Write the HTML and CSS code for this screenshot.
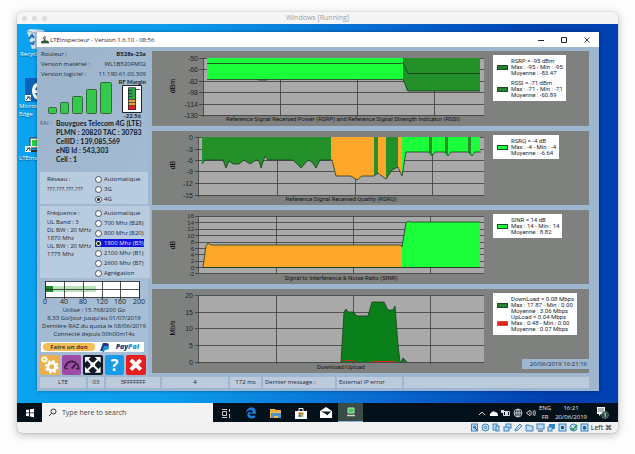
FILE: index.html
```html
<!DOCTYPE html>
<html lang="fr">
<head>
<meta charset="utf-8">
<title>LTEInspecteur</title>
<link rel="stylesheet" href="styles.css">
</head>
<body>
<div class="vm">
  <header class="vm-title">
    <span class="dot"></span><span class="dot"></span><span class="dot"></span>
    <span class="vm-name">Windows [Running]</span>
  </header>

  <main class="desktop">
    <div class="shortcut bin">
      <svg width="20" height="22" viewBox="0 0 20 22"><path d="M1 3l3-2 13 1 2 2-3 16-10 1z" fill="#cfe3f1"/><path d="M1 3l8 2 10-1M9 5l1 15" stroke="#8fb0c8" fill="none"/><path d="M3 11l3-4 2 3M8 13l-1 3-3-1" stroke="#1769c4" stroke-width="2" fill="none"/></svg>
      <span>Recycle</span>
    </div>
    <div class="shortcut edge">
      <svg width="24" height="24" viewBox="0 0 24 24"><path d="M0 0h24v24H0z" fill="#0b63b5"/><path d="M7 12C8 5 12 4 17 4v4c-4-1-6 1-7 4h8v3h-8c1 3 4 4 7 3v4c-6 1-10-3-10-10z" fill="#fff"/><path d="M0 17h6v6H0z" fill="#fff"/><path d="M1 22l3-3M2 19h3v3" stroke="#146" fill="none"/></svg>
      <span>Micros<br>Edge</span>
    </div>
    <div class="shortcut lte">
      <svg width="20" height="18" viewBox="0 0 20 18"><path d="M5 2h13v10H5z" fill="#eee" stroke="#333"/><path d="M7 4h11v6H7z" fill="#22d044"/><path d="M0 10h6v6H0z" fill="#fff"/><path d="M1 15l3-3M2 12h3v3" stroke="#146" fill="none"/><path d="M6 15h13" stroke="#333" stroke-width="2"/></svg>
      <span>LTEInspect</span>
    </div>

    <section class="app">
      <header class="app-title">
        <svg width="8" height="8" viewBox="0 0 8 8"><path d="M4 0v5M2 1l2 4" stroke="#444"/><path d="M1 5h6l1 2H0z" fill="#167b35" stroke="#222" stroke-width=".6"/></svg>
        <h1>LTEInspecteur - Version 1.6.10 - 08:56</h1>
        <button aria-label="Réduire"><svg width="8" height="8" viewBox="0 0 8 8"><path d="M1 4.500h6" stroke="#222"/></svg></button>
        <button aria-label="Agrandir"><svg width="8" height="8" viewBox="0 0 8 8"><path d="M1.500 1.500h5v5h-5z" fill="none" stroke="#222"/></svg></button>
        <button aria-label="Fermer"><svg width="8" height="8" viewBox="0 0 8 8"><path d="M1.500 1.500l5 5m0-5l-5 5" stroke="#222" stroke-width=".8"/></svg></button>
      </header>

      <div class="app-body">
        <aside class="side">
          <dl class="info">
            <dt>Routeur :</dt><dd class="strong">B528s-23a</dd>
            <dt>Version matériel :</dt><dd>WL1B520FM02</dd>
            <dt>Version logiciel :</dt><dd>11.190.61.00.309</dd>
          </dl>
          <div class="signal">
            <svg width="66" height="34" viewBox="0 0 66 34" fill="#35c94c" stroke="#33693f"><rect x="1.500" y="26.500" width="8" height="6" rx="1"/><rect x="13.500" y="21.500" width="8" height="11" rx="1"/><rect x="25.500" y="15.500" width="10" height="17" rx="1"/><rect x="39.500" y="8.500" width="10" height="24" rx="1"/><rect x="53.500" y="1.500" width="11" height="31" rx="1"/></svg>
            <div class="margin">
              <span>RF Margin</span>
              <svg width="20" height="28" viewBox="0 0 20 28"><path d="M.5.500h19v27H.5z" fill="#fff" stroke="#222"/><path d="M6 3h8v11H6z" fill="#2aa34a"/><path d="M6 14h8v7H6z" fill="#e9a13a"/><path d="M6 21h8v4H6z" fill="#df2222"/><path d="M6.500 2.500h7v22h-7zM6 5.500h4m-4 3h4m-4 3h4m-4 3h8m-8 3h8m-8 3h8M14 4.500h4" fill="none" stroke="#223" stroke-width=".7"/></svg>
              <span>-22.56</span>
            </div>
          </div>
          <div class="carrier">
            <span class="fai">FAI :</span>
            <p>Bouygues Telecom 4G (LTE)<br>PLMN : 20820 TAC : 30783<br>CellID : 139,085,569<br>eNB Id : 543,303<br>Cell : 1</p>
          </div>
          <fieldset class="group">
            <div class="note"><p>Réseau :</p><p class="mask">???.???.???.???</p></div>
            <div class="options">
              <label><input type="radio" name="net">Automatique</label>
              <label><input type="radio" name="net">3G</label>
              <label><input type="radio" name="net" checked>4G</label>
            </div>
          </fieldset>
          <fieldset class="group">
            <div class="note"><p>Fréquence :</p><p>UL Band : 3<br>DL BW : 20 MHz<br>1870 Mhz<br>UL BW : 20 MHz<br>1775 Mhz</p></div>
            <div class="options">
              <label><input type="radio" name="freq">Automatique</label>
              <label><input type="radio" name="freq">700 Mhz (B28)</label>
              <label><input type="radio" name="freq">800 Mhz (B20)</label>
              <label class="picked"><input type="radio" name="freq" checked>1800 Mhz (B3)</label>
              <label><input type="radio" name="freq">2100 Mhz (B1)</label>
              <label><input type="radio" name="freq">2600 Mhz (B7)</label>
              <label><input type="radio" name="freq">Agrégation</label>
            </div>
          </fieldset>
          <svg class="quota" viewBox="0 0 108 26">
            <path d="M5.500 1.500h94v16h-94z" fill="#fff"/>
            <path d="M12 6h44v6H12z" fill="#b9e5bb"/><path d="M5 6h8v6H5z" fill="#1f8a2c"/>
            <path d="M5.500 1.500h94v16h-94zM5 9.500h94M24.500 1v18M43.500 1v18M62.500 1v18M80.500 1v18M99.500 1v18M5.500 1v18" fill="none" stroke="#222" stroke-width=".8"/>
            <g class="scale"><text x="5" y="24">0</text><text x="24" y="24">40</text><text x="43" y="24">80</text><text x="62" y="24">120</text><text x="80" y="24">160</text><text x="99" y="24">200</text></g>
          </svg>
          <p class="usage">Utilisé : 15.768/200 Go<br>8.33 Go/jour jusqu'au 01/07/2019<br>Dernière RAZ du quota le 08/06/2019<br>Connecté depuis 00h00m14s</p>
          <a class="donate" href="#"><span class="pill">Faire un don</span>
            <svg width="10" height="9" viewBox="0 0 10 9"><path d="M3 0h4q3 1 1 4-1 2-4 2L3 8H0z" fill="#173b80"/><path d="M4 3h5q1 4-4 4l-1 2H2z" fill="#2790d8"/></svg>
            <b>Pay<i>Pal</i></b></a>
          <div class="tools">
            <button class="gear" aria-label="Réglages"><svg viewBox="0 0 20 20"><circle cx="12" cy="12" r="4" fill="none" stroke="#fff" stroke-width="3"/><circle cx="12" cy="12" r="6" fill="none" stroke="#fff" stroke-width="2" stroke-dasharray="2.400 2.300"/><circle cx="4.500" cy="4.500" r="2" fill="none" stroke="#fff" stroke-width="1.400"/><circle cx="4.500" cy="4.500" r="3" fill="none" stroke="#fff" stroke-dasharray="1.200 1.150"/></svg></button>
            <button class="meter" aria-label="Débit"><svg viewBox="0 0 20 20" fill="none" stroke="#34203f"><path d="M3 14a7 7 0 0 1 14-1v2" stroke-width="1.600"/><path d="M10 14l4-5" stroke-width="2"/><path d="M4 10l2 1M7 7l1 2M11 6v2M3 14h3m8 0h3"/></svg></button>
            <button class="expand" aria-label="Plein écran"><svg viewBox="0 0 20 20"><path d="M4 4l12 12M16 4L4 16" stroke="#fff" stroke-width="2"/><path d="M2 2h6L2 8zM18 2h-6l6 6zM2 18h6l-6-6zM18 18h-6l6-6z" fill="#fff"/><circle cx="10" cy="10" r="2.500" fill="#fff"/></svg></button>
            <button class="help" aria-label="Aide">?</button>
            <button class="quit" aria-label="Quitter"><svg viewBox="0 0 20 20"><path d="M5 5l10 10M15 5L5 15" stroke="#fff" stroke-width="4"/></svg></button>
          </div>
        </aside>

        <div class="charts">
          <section class="chart">
            <svg class="plot" viewBox="152 51 332 75">
              <path class="area" d="M203 58h281v57H203z"/>
              <path class="grid" d="M199 58.500h285M199 69.500h285M199 81.500h285M199 92.500h285M199 104.500h285M199 115.500h285M203.500 58v59M280.500 58v58M357.500 58v58M434.500 58v58"/>
              <path class="lime" d="M207 58h196v21H207z"/>
              <path class="forest" d="M403 58h77v33h-73l-4-12z"/>
              <path class="line" d="M207 63.500h194l2-1 5 11h72M207 79.500h196l5 11.500h72M258 80h9"/>
              <g class="ticks"><text x="198" y="61">-50</text><text x="198" y="72">-66</text><text x="198" y="84">-82</text><text x="198" y="95">-98</text><text x="198" y="107">-114</text><text x="198" y="118">-130</text></g>
              <text class="unit" transform="translate(175 86) rotate(-90)">dBm</text>
              <text class="caption" x="343" y="121">Reference Signal Received Power (RSRP) and Reference Signal Strength Indicator (RSSI)</text>
            </svg>
            <div class="keys"><ul class="legend">
              <li><span class="swatch dark"></span>RSRP = -95 dBm<br>Max : -95 - Min : -95<br>Moyenne : -83.47</li>
              <li class="apart"><span class="swatch dark"></span>RSSI = -71 dBm<br>Max : -71 - Min : -71<br>Moyenne : -60.89</li>
            </ul></div>
          </section>

          <section class="chart">
            <svg class="plot" viewBox="152 131 332 74">
              <path class="area" d="M198 137h286v58H198z"/>
              <path class="grid" d="M195 137.500h289M195 149.500h289M195 160.500h289M195 171.500h289M195 183.500h289M195 195.500h289M198.500 137v60M277.500 137v58M355.500 137v58M432.500 137v58"/>
              <path class="forest" d="M202 137v27l3-4h18l3 8 3-7 4 3h6l5-4 6 4 6-4 3 1 2 7 4-12 3 4h25l8 8 7-8 4 2 4 6 4-8h12v-23z"/>
              <path class="amber" d="M331 137h43v39h-12l-5 4-6-4h-15l-5-16z"/>
              <path class="forest" d="M374 137h4v36l-4 3z"/><path class="amber" d="M378 137h8v42l-8-6z"/>
              <path class="forest" d="M386 137h12v30l-6 3-6 9z"/><path class="amber" d="M398 137h4v39l-4-9z"/>
              <path class="lime" d="M402 137h78v15h-6l-3 4-3-4h-18l-3 4-3-4h-10l-3 4-3-4h-22l-4 22z"/>
              <path class="forest" d="M429 137h3v18l-3-3zM445 137h3v18l-3-3zM468 137h3v18l-3-3z"/>
              <path class="line" d="M202 164l3-4h18l3 8 3-7 4 3h6l5-4 6 4 6-4 3 1 2 7 4-12 3 4h25l8 8 7-8 4 2 4 6 4-8h12l4 16h15l6 4 5-4h12l4-3 8 6 6-9 6-3 4 9 4-24h23l3 4 3-4h10l3 4 3-4h18l3 4 3-4h6"/>
              <g class="ticks"><text x="193" y="140">0</text><text x="193" y="152">-3</text><text x="193" y="163">-6</text><text x="193" y="174">-9</text><text x="193" y="186">-12</text><text x="193" y="198">-15</text></g>
              <text class="unit" transform="translate(175 165) rotate(-90)">dB</text>
              <text class="caption" x="341" y="201">Reference Signal Received Quality (RSRQ)</text>
            </svg>
            <div class="keys"><ul class="legend">
              <li><span class="swatch lit"></span>RSRQ = -4 dB<br>Max : -4 - Min : -4<br>Moyenne : -6.64</li>
            </ul></div>
          </section>

          <section class="chart">
            <svg class="plot" viewBox="152 210 332 74">
              <path class="area" d="M198 216h286v58H198z"/>
              <path class="grid" d="M195 216.500h289M195 222.500h289M195 229.500h289M195 235.500h289M195 242.500h289M195 248.500h289M195 254.500h289M195 261.500h289M195 267.500h289M195 273.500h289M198.500 216v58M276.500 216v58M353.500 216v58M430.500 216v58"/>
              <path class="amber" d="M203 267l3-21 2-3 3 2h191v22z"/>
              <path class="lime" d="M402 267v-20l4-24 2-2 2 1h70v45z"/>
              <path class="line" d="M203 267l3-21 2-3 3 2h190l1 2 4-24 2-2 2 1h70M203 267.500h277"/>
              <g class="ticks small"><text x="194" y="218">16</text><text x="194" y="225">14</text><text x="194" y="231">12</text><text x="194" y="238">10</text><text x="194" y="244">8</text><text x="194" y="251">6</text><text x="194" y="257">4</text><text x="194" y="263">2</text><text x="194" y="270">0</text><text x="194" y="276">-2</text></g>
              <text class="unit" transform="translate(175 245) rotate(-90)">dB</text>
              <text class="caption" x="341" y="280">Signal to Interference &amp; Noise Ratio (SINR)</text>
            </svg>
            <div class="keys"><ul class="legend">
              <li><span class="swatch lit"></span>SINR = 14 dB<br>Max : 14 - Min : 14<br>Moyenne : 8.82</li>
            </ul></div>
          </section>

          <section class="chart">
            <svg class="plot" viewBox="152 289 332 84">
              <path class="area" d="M198 295h286v67H198z"/>
              <path class="grid" d="M195 295.500h289M195 312.500h289M195 328.500h289M195 345.500h289M195 362.500h289M198.500 295v69M276.500 295v69M353.500 295v69M430.500 295v69"/>
              <path class="green" d="M341 362l3-50 2-3 2 3h5l4 4h11l4-14h12l4 8h5l2-4 3 39 2 17zM401 362l2-4 4 4z"/>
              <path class="line" d="M341 362l3-50 2-3 2 3h5l4 4h11l4-14h12l4 8h5l2-4 3 39 2 17h1l2-4 4 4"/>
              <path d="M343 361.500l3-1h7l2 1M372 361.500h24" fill="none" stroke="#d12a1a"/>
              <g class="ticks"><text x="193" y="298">20</text><text x="193" y="315">15</text><text x="193" y="331">10</text><text x="193" y="348">5</text><text x="193" y="365">0</text></g>
              <text class="unit" transform="translate(175 328) rotate(-90)">Mb/s</text>
              <text class="caption" x="341" y="369">Download/Upload</text>
            </svg>
            <div class="keys"><ul class="legend">
              <li><span class="swatch dark"></span>DownLoad = 0.08 Mbps<br>Max : 17.87 - Min : 0.00<br>Moyenne : 3.06 Mbps</li>
              <li><span class="swatch red"></span>UpLoad = 0.04 Mbps<br>Max : 0.48 - Min : 0.00<br>Moyenne : 0.07 Mbps</li>
            </ul>
            <time class="stamp">20/06/2019 16:21:16</time></div>
          </section>
        </div>
      </div>

      <footer class="status">
        <span>LTE</span><span>03</span><span>3FFFFFFF</span><span>4</span><span>172 ms</span><span class="start">Dernier message :</span><span class="start">External IP error</span><span></span>
      </footer>
    </section>
  </main>

  <nav class="taskbar">
    <button class="win" aria-label="Démarrer"><svg width="10" height="10" viewBox="0 0 10 10"><path d="M1 2l3-.5v3H1zM5 1.300L9 .7v3.800H5zM1 5.300h3v3L1 8zM5 5.300h4v4L5 8.600z" fill="#fff"/></svg></button>
    <div class="search">
      <svg width="9" height="9" viewBox="0 0 9 9"><circle cx="5.500" cy="3.500" r="2.500" fill="none" stroke="#333"/><path d="M3.700 5.300L1 8" stroke="#333"/></svg>
      <input type="text" aria-label="Search" placeholder="Type here to search">
    </div>
    <button aria-label="Task view"><svg width="12" height="12" viewBox="0 0 12 12" fill="none" stroke="#ccc"><path d="M2.500 4.500h4v4h-4zM2 2.500h5M2 10.500h5M9.500 2v3M9.500 7v4"/></svg></button>
    <button aria-label="Edge"><svg width="12" height="12" viewBox="0 0 12 12"><path d="M1 6c.5-4 3-5.500 5.500-5.500C10 .5 11 3 11 6.800H4.300c.2 2.400 3.500 2.600 5.700 1.400v2.500C6 12.500 1.500 11 2.500 7c.3-1.500 1.300-2.500 2.500-3-.6.700-.7 1-.7 1.500h3.500C7.800 2 3 2.500 1 6z" fill="#1b7fe0"/></svg></button>
    <button aria-label="Explorer"><svg width="12" height="12" viewBox="0 0 12 12"><path d="M0 2h5l1 1h5v8H0z" fill="#f4bd55"/><path d="M1 6h10v5H8V9H4v2H1z" fill="#4b97c9"/><path d="M0 4h11" stroke="#d99a2b"/></svg></button>
    <button aria-label="Store"><svg width="14" height="12" viewBox="0 0 14 12"><path d="M1 4h12v8H1z" fill="#fff"/><path d="M5 4V1.500h4V4" fill="none" stroke="#fff"/><path d="M4.500 5.500H7v2.300H4.500z" fill="#e2582b"/><path d="M7 5.500h2.500v2.300H7z" fill="#6ca52d"/><path d="M4.500 7.800H7v2.300H4.500z" fill="#2c88d8"/><path d="M7 7.800h2.500v2.300H7z" fill="#efb22b"/></svg></button>
    <button aria-label="Mail"><svg width="14" height="12" viewBox="0 0 14 12"><path d="M1 4l6-4 6 4v7H1z" fill="#fff"/><path d="M2 4.500h10L8 8.500 7 7z" fill="#0b1a24"/></svg></button>
    <button class="active" aria-label="LTEInspecteur"><svg width="10" height="10" viewBox="0 0 10 10"><path d="M2 1h6v5H2z" fill="#35d34e" stroke="#c5d5c8"/><path d="M1 8.500h8" stroke="#c5d5c8" stroke-width="1.500"/></svg></button>
    <div class="tray">
      <svg width="8" height="10" viewBox="0 0 8 10"><path d="M1 7l3-3 3 3" fill="none" stroke="#ddd"/></svg>
      <svg width="9" height="10" viewBox="0 0 9 10"><path d="M1 8q-1-2 1-3 2-3 4-1 3 0 3 4z" fill="#fff"/></svg>
      <svg width="9" height="10" viewBox="0 0 9 10"><path d="M2.500 3.500h6v4h-6z" fill="none" stroke="#ddd"/><path d="M4 4h3v3H4zM0 2h3v3H0z" fill="#ddd"/></svg>
      <svg width="10" height="10" viewBox="0 0 10 10" fill="none" stroke="#ddd" stroke-width=".8"><circle cx="5" cy="5" r="4"/><path d="M1 5h8M5 1v8M5 1q-4 4 0 8M5 1q4 4 0 8"/></svg>
      <svg width="10" height="10" viewBox="0 0 10 10" fill="none" stroke="#ddd" stroke-width=".8"><path d="M1 4h1l2-2v6L2 6H1zM5.500 3.500q1 1.500 0 3M7 2.500q2 2.500 0 5M8.500 2q2 3 0 6"/></svg>
      <span class="lang">ENG<br>FR</span>
      <span class="clock">16:21<br>20/06/2019</span>
      <svg width="13" height="13" viewBox="0 0 13 13"><path d="M1 1h8v7H5L3 10V8H1z" fill="#fff"/><path d="M2 3h6M2 5h6" stroke="#123" stroke-width=".7"/><circle cx="9" cy="9" r="3.500" fill="#24463f" stroke="#8a9d98" stroke-width=".6"/><path d="M8.200 7.800l1-.7v4" fill="none" stroke="#fff" stroke-width=".8"/></svg>
    </div>
  </nav>

  <footer class="vm-status">
    <svg width="9" height="9" viewBox="0 0 9 9"><rect class="ic" x="1.500" y="1" width="6" height="7"/><circle cx="4.500" cy="4" r="1.500" fill="#247dcc"/><path d="M5 5l2 2" stroke="#234"/></svg>
    <svg width="9" height="9" viewBox="0 0 9 9"><circle class="ic" cx="4.500" cy="4.500" r="3.500"/><circle class="ic" cx="4.500" cy="4.500" r="1"/></svg>
    <svg width="9" height="9" viewBox="0 0 9 9"><rect class="ic" x="1" y="1" width="4" height="6"/><rect class="ic" x="4" y="3" width="3" height="5"/></svg>
    <svg width="9" height="9" viewBox="0 0 9 9"><rect class="ic" x="3" y="1" width="5" height="4"/><rect class="ic" x="1" y="4" width="5" height="4"/></svg>
    <svg width="9" height="9" viewBox="0 0 9 9"><path class="ic" d="M1 8l1-3 4-4 2 2-4 4z"/></svg>
    <svg width="9" height="9" viewBox="0 0 9 9"><path class="ic" d="M1 2h3l1 1h3v5H1z"/></svg>
    <svg width="9" height="9" viewBox="0 0 9 9"><rect class="ic" x="1" y="1" width="7" height="5"/><path d="M2 8h5" stroke="#246"/></svg>
    <svg width="9" height="9" viewBox="0 0 9 9"><rect class="full" x="2" y="1" width="6" height="5"/><rect class="ic" x="1" y="4" width="4" height="4"/></svg>
    <svg width="9" height="9" viewBox="0 0 9 9"><rect class="ic" x="1" y="1" width="7" height="7"/><path d="M3 3h3v3H3z" fill="#357"/></svg>
    <svg width="9" height="9" viewBox="0 0 9 9"><circle class="ic" cx="4.500" cy="4.500" r="3.500"/><path d="M2 5l2 2 4-5" fill="none" stroke="#2c9a3c" stroke-width="1.500"/></svg>
    <svg width="9" height="9" viewBox="0 0 9 9"><rect class="ic" x="1" y="1" width="7" height="7"/><path d="M3 3h3v2h1L4.500 7 2 5h1z" fill="#1668c0"/></svg>
    <span>Left ⌘</span>
  </footer>
</div>
</body>
</html>
```
FILE: styles.css
```css
* { box-sizing: border-box; margin: 0; padding: 0; }
body {
  padding: 12px 17px 20px;
  background: #fdfdfd;
  font: 7px/10px "Open Sans", sans-serif;
  color: #1c2733;
}
svg { display: block; flex: none; }
button { border: 0; background: none; font: inherit; color: inherit; display: grid; place-items: center; }
ul { list-style: none; }

.vm { border-radius: 5px; box-shadow: 0 2px 8px #0004, 0 0 1px #0006; background: #f1f1f1; overflow: hidden; }
.vm-title { display: flex; align-items: center; gap: 5px; height: 12px; padding-left: 5px; background: #f5f5f5; }
.dot { width: 5px; height: 5px; border-radius: 50%; background: #dcdcdc; }
.vm-name { flex: 1; padding-right: 35px; text-align: center; color: #a0a0a0; line-height: 12px; }

.desktop { position: relative; padding: 8px 19px 12px 20px; background: linear-gradient(90deg, #0ba2ef 0%, #0b9cec 25%, #0868cf 62%, #0040b0 88%); }
.shortcut { position: absolute; display: grid; justify-items: start; color: #fff; font-size: 6px; line-height: 8px; white-space: nowrap; text-shadow: 0 1px 1px #0008; }
.shortcut svg { margin-left: 6px; }
.bin { top: 4px; left: 3px; }
.edge { top: 54px; left: 2px; }
.lte { top: 112px; left: 2px; }

.app { position: relative; background: #9db7d1; box-shadow: 0 0 3px #0006; }
.app-title { display: flex; align-items: center; height: 15px; padding: 0 8px 0 4px; background: #fff; }
.app-title h1 { flex: 1; padding-left: 1px; font-size: 6px; font-weight: 400; }
.app-title button { width: 8px; margin-left: 15px; }
.app-body { display: grid; grid-template-columns: 111px 1fr; gap: 4px; padding: 2px 10px 0 0; }

.side { padding-left: 3px; display: flex; flex-direction: column; background: linear-gradient(120deg, #9cb3ca, #a8c0d8); }
.info { display: grid; grid-template-columns: auto 1fr; padding: 0 2px 0 1px; font-size: 6px; line-height: 10px; white-space: nowrap; }
.info dd { text-align: right; }
.info .strong { font-weight: 700; }
.signal { display: flex; justify-content: space-between; padding: 0 2px 0 7px; height: 40px; }
.signal > svg { margin-top: 2px; }
.margin { display: grid; justify-items: center; align-content: start; font: 700 6px/6px Lato, sans-serif; white-space: nowrap; }
.carrier { display: flex; gap: 3px; height: 53px; line-height: 9px; white-space: nowrap; }
.carrier p { font: 700 7px/9px Lato, sans-serif; color: #10202d; }
.fai { width: 13px; font-size: 6px; color: #41566c; }
.group { border: 0; display: grid; grid-template-columns: 55px 1fr; padding: 2px 0 0; margin-bottom: 2px; background: #b9cbdf; font-size: 6px; white-space: nowrap; }
.note { padding-left: 7px; line-height: 8px; }
.note p:first-child, .note .mask { line-height: 10px; }
.options label { display: flex; align-items: center; gap: 2px; height: 10px; margin-right: 4px; }
.options input { appearance: none; flex: none; width: 7px; height: 7px; border: 1px solid #46515c; border-radius: 50%; background: #fff; }
.options input:checked { background: radial-gradient(#222 0 1px, #fff 2px); }
.options .picked { height: 8px; margin: 1px 6px 1px 0; background: #0b12dc; color: #e6eaff; }
.quota { width: 100%; }
.scale, .ticks { font: 7px "Open Sans", sans-serif; fill: #1c2733; }
.scale text { text-anchor: middle; }
.usage { font-size: 6px; line-height: 8px; text-align: center; white-space: nowrap; }
.donate { display: flex; align-items: center; justify-content: space-between; height: 10px; margin: 4px 4px 3px 1px; padding: 0 4px 0 2px; background: #fff; color: #173b80; text-decoration: none; }
.pill { width: 52px; height: 8px; border-radius: 4px; background: #f6bd57; color: #4d3a1c; font: 700 6px/8px "Open Sans", sans-serif; text-align: center; }
.donate b { padding-right: 1px; font: italic 800 7px/10px "Open Sans", sans-serif; }
.donate i { color: #2790d8; }
.tools { display: grid; grid-template-columns: repeat(5, 1fr); gap: 2px; padding: 0 2px 0 0; }
.tools button { height: 20px; border-radius: 2px; }
.tools svg { width: 100%; }
.gear { background: #e9b04d; }
.meter { background: #9e4ca8; }
.expand { background: #101c28; }
.tools .help { background: #179be8; color: #fff; font: 700 16px/20px "Open Sans", sans-serif; }
.quit { background: #e81c1c; }

.charts { display: flex; flex-direction: column; gap: 5px; padding-top: 2px; }
.chart { display: grid; grid-template-columns: 1fr 96px; gap: 9px; background: #7f817f; }
.plot { width: 100%; }
.area { fill: #a9a9a9; }
.grid { stroke: #3c3c3c; stroke-width: .8; fill: none; }
.line { stroke: #173d1c; stroke-width: .8; fill: none; }
.lime { fill: #1bff3b; }
.forest { fill: #23902a; }
.green { fill: #09801a; }
.amber { fill: #ffa729; }
.ticks { font-family: "Liberation Sans", sans-serif; text-anchor: end; }
.ticks.small { font-size: 6px; }
.unit { font: 7px "Liberation Sans", sans-serif; text-anchor: middle; }
.caption { font: 6px Roboto, sans-serif; text-anchor: middle; fill: #161616; }
.keys { display: flex; flex-direction: column; align-items: flex-start; padding: 4px 0; }
.legend { padding: 3px 3px 3px 18px; background: #fff; font: 6px/6px Roboto, sans-serif; white-space: nowrap; }
.legend li { position: relative; }
.apart { margin-top: 4px; }
.swatch { position: absolute; left: -14px; top: 7px; width: 11px; height: 5px; border: 1px solid #1c4a24; }
.dark { background: #23802d; }
.lit { background: #1bff3b; }
.red { background: #e02020; border-color: #e05030; }
.stamp { margin-top: auto; align-self: flex-end; padding: 0 2px 0 8px; background: #9db7d1; font-size: 6px; }

.status { display: grid; grid-template-columns: 46px 16px 54px 66px 31px 72px 65px 1fr; gap: 2px; padding: 2px 10px 3px 3px; }
.status span { height: 11px; background: #bccbdc; text-align: center; font-size: 6px; line-height: 11px; white-space: nowrap; }
.status .start { text-align: left; padding-left: 2px; }

.taskbar { display: flex; height: 19px; background: #02101a; color: #e6e6e6; }
.taskbar > button { width: 25px; }
.taskbar .active { background: #3b4c48; border-bottom: 1px solid #8fb8de; }
.search { display: flex; align-items: center; gap: 5px; width: 171px; padding-left: 6px; background: #f3f3f3; }
.search input { flex: 1; min-width: 0; border: 0; background: none; font: 7px/12px "Open Sans", sans-serif; }
.search input::placeholder { color: #444; }
.tray { display: flex; align-items: center; gap: 3px; margin-left: auto; padding-right: 9px; font-size: 6px; line-height: 9px; text-align: center; }
.lang { padding-right: 1px; }
.clock { padding-right: 6px; }

.vm-status { display: flex; align-items: center; justify-content: flex-end; gap: 2px; height: 11px; padding-right: 6px; color: #222; }
.ic { fill: #bfdcf3; stroke: #3a82c0; }
.full { fill: #2b86d0; }
```
